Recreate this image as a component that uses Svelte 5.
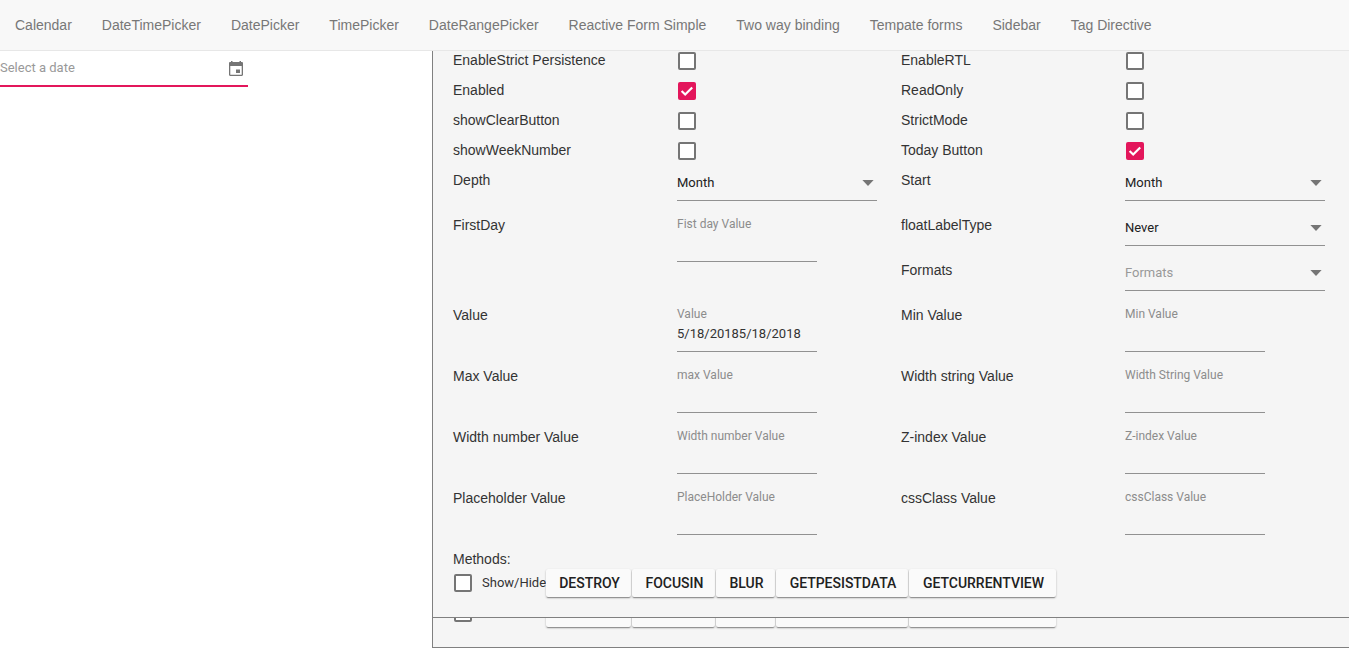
<script>
  const links = ['Calendar', 'DateTimePicker', 'DatePicker', 'TimePicker', 'DateRangePicker', 'Reactive Form Simple', 'Two way binding', 'Tempate forms', 'Sidebar', 'Tag Directive'];
  const columns = [
    [
      { label: 'EnableStrict Persistence', kind: 'check' },
      { label: 'Enabled', kind: 'check', on: true },
      { label: 'showClearButton', kind: 'check' },
      { label: 'showWeekNumber', kind: 'check' },
      { label: 'Depth', kind: 'select', value: 'Month' },
      { label: 'FirstDay', kind: 'input', hint: 'Fist day Value', tall: true },
      { label: 'Value', kind: 'input', hint: 'Value', value: '5/18/20185/18/2018' },
      { label: 'Max Value', kind: 'input', hint: 'max Value' },
      { label: 'Width number Value', kind: 'input', hint: 'Width number Value' },
      { label: 'Placeholder Value', kind: 'input', hint: 'PlaceHolder Value' }
    ],
    [
      { label: 'EnableRTL', kind: 'check' },
      { label: 'ReadOnly', kind: 'check' },
      { label: 'StrictMode', kind: 'check' },
      { label: 'Today Button', kind: 'check', on: true },
      { label: 'Start', kind: 'select', value: 'Month' },
      { label: 'floatLabelType', kind: 'select', value: 'Never' },
      { label: 'Formats', kind: 'select', hint: 'Formats' },
      { label: 'Min Value', kind: 'input', hint: 'Min Value' },
      { label: 'Width string Value', kind: 'input', hint: 'Width String Value' },
      { label: 'Z-index Value', kind: 'input', hint: 'Z-index Value' },
      { label: 'cssClass Value', kind: 'input', hint: 'cssClass Value' }
    ]
  ];
  const buttons = [
    { text: 'Destroy', width: 85 },
    { text: 'FocusIn', width: 83 },
    { text: 'Blur', width: 59 },
    { text: 'GetPesistData', width: 132 },
    { text: 'GetCurrentView', width: 147 }
  ];
</script>

{#snippet box(on)}
  <span class="box" class:on>
    {#if on}
      <svg width="18" height="18" viewBox="0 0 18 18"><path d="M3.600 9 7.200 12.500 14.200 5.500" fill="none" stroke="#fff" stroke-width="2.200" /></svg>
    {/if}
  </span>
{/snippet}

<nav>
  {#each links as link}<a href="#top">{link}</a>{/each}
</nav>
<main>
  <div class="picker">
    <span>Select a date</span>
    <svg width="14" height="16" viewBox="0 0 14 16">
      <path fill="#757575" fill-rule="evenodd" d="M2 0h1.500v1h7V0H12v1h.8c.7 0 1.200.5 1.200 1.200v11.600c0 .7-.5 1.200-1.200 1.200H1.200C.5 15 0 14.500 0 13.800V2.200C0 1.500.5 1 1.200 1H2zM1.300 5v8.700h11.400V5zM7 8.500h4v3.500H7z" />
    </svg>
  </div>
  <div class="side">
    <section class="panel">
      <div class="cols">
        {#each columns as rows}
          <div class="col">
            {#each rows as r}
              <div class="row {r.kind}" class:tall={r.tall}>
                <span>{r.label}</span>
                {#if r.kind === 'check'}
                  {@render box(r.on)}
                {:else if r.kind === 'select'}
                  <div class="drop">
                    <span class:muted={!r.value}>{r.value ?? r.hint}</span>
                    <svg width="12" height="6" viewBox="0 0 12 6"><path d="M.4 0h11.200L6 6z" fill="#757575" /></svg>
                  </div>
                {:else}
                  <div class="field"><small>{r.hint}</small><span>{r.value ?? ''}</span></div>
                {/if}
              </div>
            {/each}
          </div>
        {/each}
      </div>
      <div class="title">Methods:</div>
      <div class="methods">
        {@render box(false)}
        <span class="show">Show/Hide</span>
        {#each buttons as b}<button style="width:{b.width}px">{b.text}</button>{/each}
      </div>
    </section>
    <section class="under">
      <div class="methods">
        {@render box(false)}
        <span class="show"></span>
        {#each buttons as b}<button aria-label={b.text} style="width:{b.width}px"></button>{/each}
      </div>
    </section>
  </div>
</main>

<style>
  :global(body) { margin: 0; background: #fff; overflow: hidden; font: 14px/20px "Liberation Sans", Arial, sans-serif; color: #333; }
  nav { position: relative; z-index: 1; box-sizing: border-box; height: 51px; background: #f8f8f8; border-bottom: 1px solid #e7e7e7; display: flex; }
  nav a { padding: 15px; color: #777; text-decoration: none; white-space: nowrap; }
  main { display: flex; height: 598px; margin-top: -1px; }
  .picker { box-sizing: border-box; width: 248px; height: 37px; margin-right: 184px; border-bottom: 2px solid #e3165b; display: flex; justify-content: space-between; padding: 0 5px 0 0; font: 13px/36px Roboto, sans-serif; color: #999; flex: none; }
  .picker svg { margin-top: 11px; }
  .side { flex: 1; min-width: 0; background: #f5f5f5; border-left: 1px solid #808080; }
  .panel { box-sizing: border-box; height: 568px; border-bottom: 1px solid #808080; padding-left: 20px; }
  .cols { display: flex; }
  .col { width: 448px; flex: none; }
  .row { display: grid; grid-template-columns: 224px 224px; align-items: start; height: 61px; }
  .row.check { height: 30px; }
  .row.select { height: 45px; }
  .row.tall { height: 90px; }
  .box { box-sizing: border-box; width: 18px; height: 18px; margin: 2px 0 0 1px; border: 2px solid #757575; border-radius: 2px; background: #fff; display: block; flex: none; }
  .box.on { border: 0; background: #e3165b; }
  .box svg { display: block; }
  .drop { width: 200px; height: 30px; border-bottom: 1px solid #919191; display: flex; justify-content: space-between; font: 13px/25px Roboto, sans-serif; color: #212121; }
  .drop svg { margin: 10px 3px 0 0; }
  .drop .muted { color: #999; }
  .field { width: 140px; height: 46px; border-bottom: 1px solid #919191; font: 13px/20px Roboto, sans-serif; color: #333; }
  .field small { display: block; font-size: 12px; line-height: 18px; color: #8c8c8c; }
  .field span { display: block; line-height: 21px; }
  .title { height: 20px; }
  .methods { display: flex; height: 28px; }
  .methods .box { margin-top: 5px; }
  .show { width: 64px; margin: 0 0 0 10px; font: 13px/28px Roboto, sans-serif; white-space: nowrap; }
  button { box-sizing: border-box; height: 28px; margin: 0 1px 0 0; padding: 0 0 0 2px; border: 0; border-radius: 2px; background: #fafafa; color: #212121; font: 500 14px/28px Roboto, sans-serif; letter-spacing: -0.02px; text-transform: uppercase; box-shadow: 0 2px 1px -1px rgba(0,0,0,.25), 0 1px 2px rgba(0,0,0,.3); }
  .under { height: 29px; overflow: hidden; border-bottom: 1px solid #808080; padding-left: 20px; }
  .under .methods { margin-top: -19px; }
</style>
